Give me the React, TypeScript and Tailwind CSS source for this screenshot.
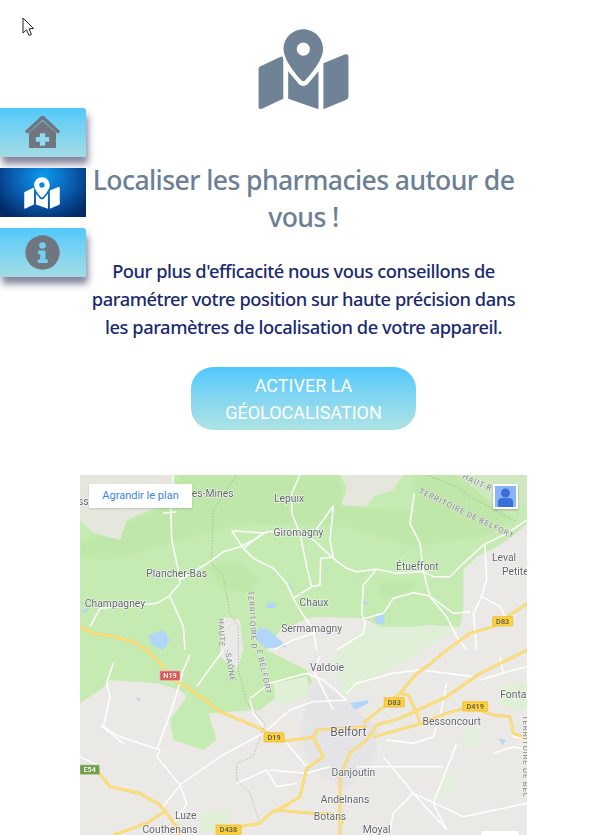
const MapPinIcon = ({ className }: { className: string }) => (
  <svg viewBox="774 86 275 246" className={className} fill="currentColor">
    <path d="M781 199 L842 170 Q850 168 850 176 L850 298 L785 328 Q775 332 775 322 L775 208 Q775 202 781 199 Z" />
    <path d="M865 214 L898 254 Q911 264 924 254 L957 214 L957 330 L865 298 Z" />
    <path d="M972 190 L1038 163 Q1048 160 1048 170 L1048 292 Q1048 299 1040 302 L972 330 Z" />
    <path
      fillRule="evenodd"
      d="M911 87 C944 87 971 114 971 147 C971 180 935 222 917 242 Q911 248 905 242 C887 222 851 180 851 147 C851 114 878 87 911 87 Z M911 127 A20 20 0 1 0 911 167 A20 20 0 1 0 911 127 Z"
    />
  </svg>
);

const HomeIcon = () => (
  <svg viewBox="0 0 110 100" className="w-[37px] h-[33px]">
    <path d="M5 50 L55 4 L105 50" fill="none" stroke="#70767f" strokeWidth="11" />
    <path d="M14 50 L55 15 L96 50 L96 94 Q96 97 92 97 L18 97 Q14 97 14 94 Z" fill="#70767f" />
    <path d="M47 52 H63 V64 H75 V78 H63 V90 H47 V78 H35 V64 H47 Z" fill="#8fdcef" />
  </svg>
);

const InfoIcon = () => (
  <svg viewBox="0 0 106 106" className="w-[35px] h-[35px]">
    <circle cx="53" cy="53" r="52" fill="#70767f" />
    <circle cx="53" cy="32" r="10" fill="#70d0f0" />
    <path d="M40 47 H62 V74 H69 V85 H39 V74 H46 V58 H40 Z" fill="#70d0f0" />
  </svg>
);

const Shield = ({ x, y, w, label, red, green }: { x: number; y: number; w: number; label: string; red?: boolean; green?: boolean }) => (
  <g>
    <rect x={x} y={y} width={w} height="28" rx="2" fill={red ? '#d9585a' : green ? '#6e9e4a' : '#fdd13c'} stroke={red ? '#ecb0b0' : green ? '#a9c68f' : '#e8b820'} strokeWidth="2" />
    <text x={x + w / 2} y={y + 21} textAnchor="middle" fontSize="22" fill={red || green ? '#ffffff' : '#555555'} fontFamily="Roboto, sans-serif" fontWeight="500">{label}</text>
  </g>
);

const whiteRoads = [
  'M280 15 L272 100 L275 210 L295 300 L300 340 L265 380 L230 400 L180 405 L60 415 L30 470',
  'M250 130 L290 125',
  'M660 15 L635 70 L635 130 L660 190 L680 290 L695 350',
  'M300 330 L390 275 L430 245 L480 230 L530 205 L560 185 L660 180 L700 210 L760 265 L800 295 L830 305 L890 298 L950 310 L1030 305 L1060 320 L1110 320 L1150 280 L1210 225 L1280 190 L1341 150',
  'M455 182 L490 235 L540 195 M455 182 L560 190',
  'M490 235 L520 265 L580 295 L620 340 L640 385 L660 420 L700 480 L710 540',
  'M640 385 L695 350 L720 345 L722 265 L760 262 L750 210 L760 108 L700 190',
  'M890 298 L850 345 L845 430 L855 460 L850 490 L770 540',
  'M1003 70 L990 160 L1020 220 L1030 305 L1050 380 L1100 440 L1130 500 L1160 540',
  'M855 445 L910 430 L940 385 L1000 368 L1050 378 L1120 430 L1170 425',
  'M1215 225 L1220 330 L1205 380 L1180 430 L1190 540',
  'M1205 380 L1260 410 L1290 470',
  'M270 380 L310 470 L315 540',
  'M580 540 L640 510 L700 490',
  'M100 580 L80 640 L90 680 L70 770 L120 800 L240 840 L230 860 L300 945 L250 1010',
  'M330 555 L310 600 L290 670 L260 760 L230 840',
  'M430 540 L350 650',
  'M510 690 L520 730 L550 770 M510 685 L570 640 L680 610 L730 630 L800 690',
  'M300 945 L420 860 L550 790 L630 720 L700 695 L800 690',
  'M620 820 L680 890 L730 860',
  'M720 560 L700 600 L720 640 L760 720',
  'M800 670 L830 640 L940 610 L1020 600 L1100 610 L1180 620',
  'M920 810 L1000 820 L1060 800 L1080 740 L1100 640',
  'M910 860 L1000 970 L1100 1080',
  'M1000 970 L940 1030 L930 1080',
  'M830 890 L1000 890 L1090 890',
  'M570 900 L680 910 L750 890 M470 940 L560 900 L590 950 L650 940',
  'M1200 630 L1300 600 L1341 590 M1260 560 L1270 610',
  'M1290 750 L1300 800 L1341 805 M1130 820 L1060 1000 L1100 1080',
  'M0 860 L60 890 M60 765 L130 820',
  'M1240 850 L1300 830 L1341 840 M1000 970 L1150 1040 L1341 1000',
  'M300 945 L320 1000 L270 1080',
];

const yellowRoads = [
  'M0 470 L40 490 L100 500 L160 515 L200 540 L250 590 L270 625 L320 650 L380 695 L420 725 L540 775 L580 800 L620 812 L700 802 L710 780 L800 775 L860 770',
  'M700 802 L730 860 L680 895 L660 980 L620 1005 L570 1030 L540 1060 L480 1070 L420 1080',
  'M1341 400 L1240 470 L1170 490 L1100 540 L1040 590 L1010 610 L960 670 L850 760',
  'M1341 540 L1200 610 L1100 680 L960 745 L890 765 L860 810 L810 850 L780 920 L780 1095',
  'M960 670 L985 675 L1015 740 L1020 765',
  'M880 800 L1010 765 L1100 730 L1170 710 L1240 735 L1290 740 L1300 790 L1341 805',
  'M50 900 L90 950 L180 970 L240 1005 L290 1070 L300 1095',
  'M580 1020 L700 1030 L750 1030 L790 1060',
  'M260 1020 L200 1060 L100 1095',
];

const labels: [string, number, number][] = [
  ['es-Mines', 398, 82],
  ['ss', 10, 106],
  ['Lepuix', 627, 96],
  ['Giromagny', 655, 198],
  ['Plancher-Bas', 290, 322],
  ['Champagney', 105, 412],
  ['Chaux', 702, 409],
  ['Sermamagny', 695, 485],
  ['Étueffont', 1012, 300],
  ['Leval', 1272, 274],
  ['Petite', 1306, 316],
  ['Valdoie', 741, 602],
  ['Fonta', 1300, 684],
  ['Bessoncourt', 1115, 764],
  ['Danjoutin', 820, 918],
  ['Andelnans', 795, 1000],
  ['Luze', 317, 1046],
  ['Botans', 750, 1050],
  ['Couthenans', 270, 1088],
  ['Moyal', 890, 1090],
];

const Map = () => (
  <svg viewBox="0 15 1341 1080" className="block h-[360px] w-[447px] blur-[0.45px]">
    <rect x="0" y="15" width="1341" height="1080" fill="#ebe9e5" />
    <path d="M0 15 L1341 15 L1341 160 L1310 190 L1250 230 L1190 260 L1150 300 L1150 420 L1140 470 L1050 465 L920 480 L850 445 L700 440 L600 480 L560 540 L680 600 L700 640 L590 680 L540 720 L450 725 L385 730 L410 810 L370 840 L280 810 L270 750 L320 680 L300 660 L230 640 L90 630 L60 660 L0 700 Z" fill="#c6ebb2" />
    <g className="blur-[3px]" fill="#bfe7aa">
      <path d="M300 15 L780 15 L790 110 L1000 120 L1000 15 L1130 15 L1300 150 L1200 200 L1000 230 L800 170 L500 160 L300 210 L100 270 L0 260 L0 220 L140 160 L270 100 Z" />
      <path d="M380 290 L470 270 L540 330 L500 370 L420 350 Z" />
      <path d="M900 340 L1010 330 L1000 360 L900 390 Z" />
    </g>
    <path d="M0 15 L280 15 L260 100 L140 150 L120 210 L40 190 L0 150 Z" fill="#e5e6dc" />
    <path d="M780 15 L970 15 L940 60 L880 80 L860 110 L785 105 L800 50 Z" fill="#e5e6dc" />
    <path d="M1130 15 L1341 15 L1341 100 L1280 130 Z" fill="#cfe8bf" />
    <path d="M430 440 L480 450 L490 540 L470 600 L420 560 Z" fill="#ebe9e5" />
    <path d="M850 470 L1140 470 L1000 560 L860 640 L790 680 L760 560 Z" fill="#dff0d6" />
    <path d="M580 640 L680 620 L690 680 L590 710 Z" fill="#dff0d6" />
    <path d="M360 1030 L450 1020 L440 1080 L360 1090 Z" fill="#dff0d6" />
    <path d="M1080 910 L1130 900 L1130 970 L1070 990 Z" fill="#e3eedc" />
    <path d="M1150 770 L1200 770 L1200 840 L1150 830 Z" fill="#e3eedc" />
    <path d="M1260 650 L1341 640 L1341 720 L1260 710 Z" fill="#dff0d6" />
    <path d="M700 620 L800 700 L900 780 L880 870 L800 960 L700 900 L660 800 Z" fill="#e4e3e6" className="blur-[3px]" />
    <path d="M205 495 L250 480 L270 510 L250 540 L215 525 Z M560 400 L590 400 L585 415 L560 415 Z M520 480 L560 475 L600 510 L620 530 L560 535 L530 510 Z M885 440 L915 432 L912 462 L888 460 Z M810 700 L865 690 L865 700 L825 720 Z" fill="#b0d6f8" />
    <path d="M625 330 L645 370 L630 350 Z M830 325 L840 330 L832 332 Z M850 390 L866 400 L852 405 Z M735 290 L745 295 L738 300 Z M170 680 L185 690 L172 692 Z M1255 805 L1278 810 L1268 825 Z M0 425 L25 415 L20 430 Z" fill="#b0d6f8" />
    <path d="M470 15 L400 120 L395 280 L430 320 L450 430 L475 470 L475 600 L500 700 L555 760 L520 860 L470 880 L470 930 L510 970 L540 1060 M1040 15 L1130 50 L1170 80 L1310 155" fill="none" stroke="#9c9c94" strokeWidth="2" strokeDasharray="4 5" />
    <g fill="none" stroke="#ffffff" strokeWidth="4.5" strokeLinejoin="round">
      {whiteRoads.map((d) => (
        <path key={d} d={d} />
      ))}
    </g>
    <g fill="none" stroke="#f6cc5c" strokeWidth="8" strokeLinejoin="round">
      {yellowRoads.map((d) => (
        <path key={d} d={d} />
      ))}
    </g>
    <g fill="none" stroke="#fde27e" strokeWidth="5" strokeLinejoin="round">
      {yellowRoads.map((d) => (
        <path key={d} d={d} />
      ))}
    </g>
    <Shield x={240} y={603} w={60} label="N19" red />
    <Shield x={1238} y={440} w={60} label="D83" />
    <Shield x={913} y={683} w={60} label="D83" />
    <Shield x={1148} y={695} w={75} label="D419" />
    <Shield x={552} y={788} w={60} label="D19" />
    <Shield x={408} y={1065} w={75} label="D438" />
    <Shield x={0} y={885} w={58} label="E54" green />
    <g fontFamily="Roboto, sans-serif" fontSize="31" fill="#5f6368" stroke="#ffffff" strokeWidth="3" textAnchor="middle" className="[paint-order:stroke]">
      {labels.map(([t, x, y]) => (
        <text key={t} x={x} y={y}>{t}</text>
      ))}
      <text x="805" y="797" fontSize="36">Belfort</text>
    </g>
    <g fontFamily="Roboto, sans-serif" fontSize="24" fontWeight="500" fill="#8f9296" stroke="#ffffff" strokeWidth="2" letterSpacing="2" className="[paint-order:stroke]">
      <text transform="translate(1015 68) rotate(26)">TERRITOIRE DE BELFORT</text>
      <text transform="translate(1145 25) rotate(24)">HAUT-R</text>
      <text transform="translate(503 362) rotate(86)">TERRITOIRE D</text>
      <text transform="translate(530 540) rotate(78)">E BELFORT</text>
      <text transform="translate(415 445) rotate(88)">HAUTE</text>
      <text transform="translate(434 540) rotate(80)">-SAÔNE</text>
      <text transform="translate(1330 735) rotate(90)">TERRITOIRE DE BEL</text>
    </g>
    <rect x="1205" y="1083" width="110" height="14" fill="#ffffff" />
  </svg>
);

const Cursor = () => (
  <svg viewBox="0 0 13 20" className="absolute left-[22px] top-[17px] h-[20px] w-[13px]">
    <path d="M1 1 L1 16 L4.5 12.8 L7 18.5 L9.5 17.4 L7 11.8 L11.5 11.5 Z" fill="#ffffff" stroke="#222222" strokeWidth="1" />
  </svg>
);

export default function App() {
  return (
    <div className="relative h-[835px] w-[600px] overflow-hidden bg-white font-['Noto_Sans',sans-serif]">
      <Cursor />

      {/* Side menu */}
      <div className="absolute left-0 top-[108px] flex flex-col gap-[11px]">
        <div className="flex h-[49px] w-[86px] items-center justify-center rounded-r-[3px] bg-gradient-to-b from-[#4fc8fb] to-[#a2dde4] pr-[2px] shadow-[2px_7px_7px_rgba(50,50,90,0.6)]">
          <HomeIcon />
        </div>
        <div className="flex h-[49px] w-[86px] items-center justify-center bg-[radial-gradient(ellipse_65%_95%_at_50%_18%,#0a9cf0_0%,#0a5cb0_55%,#012a66_100%)] pr-[2px]">
          <MapPinIcon className="h-[32px] w-[36px] text-white" />
        </div>
        <div className="flex h-[49px] w-[86px] items-center justify-center rounded-r-[3px] bg-gradient-to-b from-[#4fc8fb] to-[#a2dde4] pr-[2px] shadow-[2px_7px_7px_rgba(50,50,90,0.6)]">
          <InfoIcon />
        </div>
      </div>

      {/* Main column */}
      <div className="ml-[80px] flex w-[447px] flex-col items-center pt-[29px]">
        <MapPinIcon className="h-[81px] w-[91px] text-[#708296]" />
        <h1 className="mt-[52px] w-[436px] text-center text-[26.6px] leading-[37px] font-medium tracking-[-0.6px] text-[#6c7f95]">
          Localiser les pharmacies autour de vous !
        </h1>
        <p className="mt-[21px] w-[436px] text-center text-[18.3px] leading-[28px] font-medium tracking-[-0.45px] text-[#1a2a6e]">
          Pour plus d'efficacité nous vous conseillons de paramétrer votre position sur haute précision dans les paramètres de localisation de votre appareil.
        </p>
        <button className="mt-[26px] h-[63px] w-[225px] rounded-[22px] bg-gradient-to-b from-[#4fc8fb] to-[#aee3e4] px-4 font-['Roboto',sans-serif] text-[18px] leading-[27px] text-white">
          ACTIVER LA GÉOLOCALISATION
        </button>

        <div className="relative mt-[45px] h-[360px] w-[447px] overflow-hidden">
          <Map />
          <div className="absolute left-[9px] top-[9px] flex h-[24px] w-[103px] items-center justify-center bg-white font-['Roboto',sans-serif] text-[11px] text-[#3b82e8] shadow-[0_1px_2px_rgba(0,0,0,0.15)]">
            Agrandir le plan
          </div>
          <div className="absolute left-[413px] top-[9px] h-[25px] w-[25px] border-2 border-white bg-[#8ab4f8] shadow-[0_1px_2px_rgba(0,0,0,0.25)]">
            <svg viewBox="0 0 21 21" className="h-full w-full">
              <circle cx="10.5" cy="7" r="4.5" fill="#3b6fd8" />
              <path d="M3 21 V16 Q3 12 8 12 H13 Q18 12 18 16 V21 Z" fill="#3b6fd8" />
            </svg>
          </div>
        </div>
      </div>
    </div>
  );
}
